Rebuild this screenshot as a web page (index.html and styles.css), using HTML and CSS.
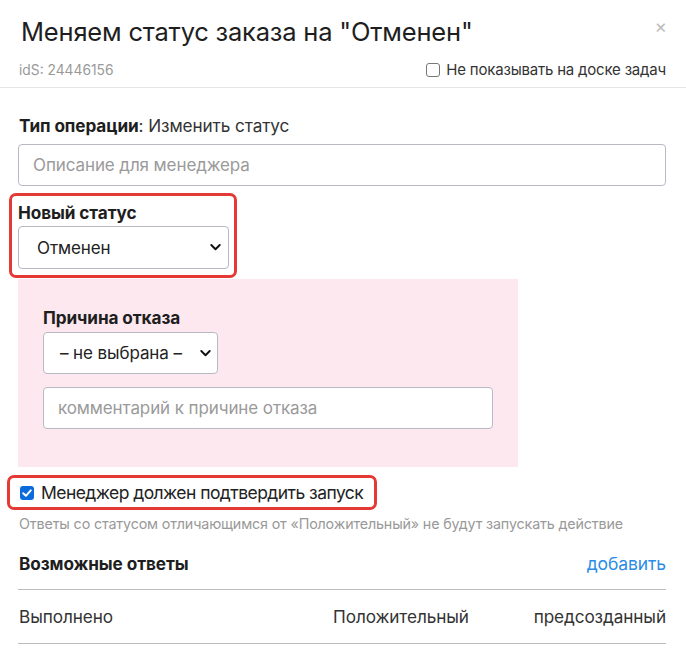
FILE: index.html
```html
<!DOCTYPE html>
<html lang="ru">
<head>
<meta charset="utf-8">
<link rel="stylesheet" href="styles.css">
</head>
<body>
<div class="modal">
  <div class="head">
    <h1 class="title">Меняем статус заказа на "Отменен"</h1>
    <span class="close">×</span>
  </div>
  <div class="meta">
    <span class="ids">idS: 24446156</span>
    <label class="hide-check"><span class="box"></span>Не показывать на доске задач</label>
  </div>
  <div class="content">
    <div class="optype"><b>Тип операции</b>: Изменить статус</div>
    <div class="input wide">Описание для менеджера</div>
    <div class="hl hl-status">
      <div class="label">Новый статус</div>
      <div class="select status-select"><span>Отменен</span><svg class="chev" viewBox="0 0 12 8" width="11" height="7"><path d="M1.2 1.2 6 6 10.8 1.2" fill="none" stroke="#111" stroke-width="2.2" stroke-linecap="round" stroke-linejoin="round"/></svg></div>
    </div>
    <div class="reason">
      <div class="label">Причина отказа</div>
      <div class="select reason-select"><span>– не выбрана –</span><svg class="chev" viewBox="0 0 12 8" width="11" height="7"><path d="M1.2 1.2 6 6 10.8 1.2" fill="none" stroke="#111" stroke-width="2.2" stroke-linecap="round" stroke-linejoin="round"/></svg></div>
      <div class="input reason-input">комментарий к причине отказа</div>
    </div>
    <div class="hl hl-confirm">
      <span class="cb"><svg viewBox="0 0 14 14" width="14" height="14"><path d="M3.2 7.2 5.9 9.8 10.8 4.4" fill="none" stroke="#fff" stroke-width="2" stroke-linecap="round" stroke-linejoin="round"/></svg></span>
      <span class="confirm-text">Менеджер должен подтвердить запуск</span>
    </div>
    <div class="hint">Ответы со статусом отличающимся от «Положительный» не будут запускать действие</div>
    <div class="answers-head">
      <b>Возможные ответы</b>
      <span class="add">добавить</span>
    </div>
    <div class="row">
      <span>Выполнено</span>
      <span>Положительный</span>
      <span class="last">предсозданный</span>
    </div>
  </div>
</div>
</body>
</html>
```

FILE: styles.css
```css
* { box-sizing: border-box; }
html, body { margin: 0; padding: 0; background: #fff; }
body {
  font-family: Inter, "Noto Sans", sans-serif;
  color: #222;
  width: 686px;
  height: 655px;
  overflow: hidden;
}
.modal { width: 686px; }
.head {
  display: flex;
  justify-content: space-between;
  align-items: flex-start;
  padding: 16px 20px 0 21px;
}
.title {
  margin: 0;
  font-size: 25.5px;
  font-weight: 400;
  line-height: 32px;
  letter-spacing: -0.2px;
  color: #1e1e1e;
}
.close {
  color: #bdbdbd;
  font-size: 19px;
  line-height: 19px;
  margin-top: 1px;
  margin-right: -1px;
}
.meta {
  display: flex;
  justify-content: space-between;
  padding: 13px 20px 0 19px;
  height: 40px;
  border-bottom: 1px solid #e4e4e4;
  align-items: flex-start;
}
.ids { color: #999; font-size: 13.8px; line-height: 18px; }
.hide-check {
  display: flex;
  align-items: center;
  gap: 6px;
  font-size: 15px;
  line-height: 18px;
  color: #333;
  letter-spacing: -0.2px;
}
.box {
  width: 14px; height: 14px;
  border: 1px solid #777;
  border-radius: 3px;
  background: #fff;
}
.content { padding: 27px 20px 0 18px; }
.optype { font-size: 17.2px; line-height: 22px; color: #333; padding-left: 1px; letter-spacing: -0.1px; }
.optype b { font-weight: 700; color: #1e1e1e; }
.input {
  border: 1px solid #b9b9c6;
  border-radius: 4px;
  height: 42px;
  display: flex;
  align-items: center;
  padding-left: 14px;
  color: #9a9a9a;
  font-size: 17px;
  letter-spacing: -0.1px;
  background: #fff;
}
.wide { margin-top: 7px; }
.hl {
  border: 3px solid #e53935;
  border-radius: 7px;
}
.hl-status {
  margin: 7px 0 0 -9px;
  width: 228px;
  padding: 6px 5px 6px 6px;
}
.label { font-size: 17.2px; font-weight: 700; line-height: 22px; color: #1e1e1e; letter-spacing: -0.1px; }
.select {
  border: 1px solid #b9b9c6;
  border-radius: 4px;
  height: 43px;
  display: flex;
  align-items: center;
  justify-content: space-between;
  background: #fff;
  color: #222;
  font-size: 17px;
  letter-spacing: -0.1px;
  margin-top: 2px;
}
.status-select { padding: 0 7px 0 18px; }
.chev { display: block; }
.reason {
  background: #fde8ef;
  width: 500px;
  margin-top: 1px;
  padding: 28px 25px 38px 25px;
}
.reason-select { width: 175px; height: 42px; padding: 0 6px 0 16px; margin-top: 3px; }
.reason-input { margin-top: 13px; height: 42px; color: #9a9a9a; }
.hl-confirm {
  margin: 8px 0 0 -11px;
  width: 370px;
  height: 35px;
  display: flex;
  align-items: center;
  padding-left: 10px;
  gap: 7px;
}
.cb {
  width: 14px; height: 14px;
  border-radius: 3px;
  background: #0b6bdc;
  display: flex;
  flex: none;
}
.confirm-text { font-size: 17.5px; color: #222; letter-spacing: -0.55px; white-space: nowrap; }
.hint {
  margin-top: 5px;
  padding-left: 1px;
  font-size: 14.3px;
  color: #999;
  line-height: 18px;
  letter-spacing: -0.15px;
  white-space: nowrap;
}
.answers-head {
  display: flex;
  justify-content: space-between;
  align-items: center;
  margin-top: 18px;
  padding-left: 1px;
  font-size: 17.2px;
  height: 24px;
  letter-spacing: -0.1px;
}
.answers-head b { color: #1e1e1e; }
.add { color: #2a8ce6; font-size: 17.5px; }
.row {
  margin-top: 14px;
  border-top: 1px solid #bdbdbd;
  border-bottom: 1px solid #bdbdbd;
  height: 55px;
  display: grid;
  grid-template-columns: 314px auto 1fr;
  align-items: center;
  padding-left: 1px;
  font-size: 17.2px;
  color: #333;
  letter-spacing: -0.1px;
}
.row .last { justify-self: end; }
```
